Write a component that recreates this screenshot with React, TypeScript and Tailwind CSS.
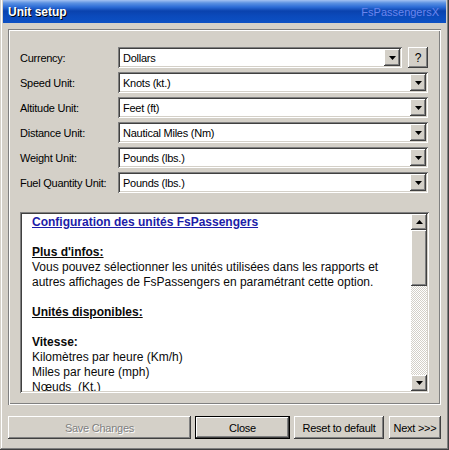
import React from "react";

const raised =
  "shadow-[inset_-1px_-1px_#404040,inset_1px_1px_#ffffff,inset_-2px_-2px_#808080,inset_2px_2px_#d4d0c8]";
const sunken =
  "shadow-[inset_1px_1px_#808080,inset_-1px_-1px_#ffffff,inset_2px_2px_#404040,inset_-2px_-2px_#d4d0c8]";
const etched =
  "shadow-[inset_1px_1px_#808080,inset_-1px_-1px_#ffffff,inset_2px_2px_#ffffff,inset_-2px_-2px_#808080]";

function DownArrow() {
  return (
    <svg width="7" height="4" viewBox="0 0 7 4" className="block">
      <path d="M0 0h7L3.5 4z" fill="#000" />
    </svg>
  );
}
function UpArrow() {
  return (
    <svg width="7" height="4" viewBox="0 0 7 4" className="block">
      <path d="M0 4h7L3.5 0z" fill="#000" />
    </svg>
  );
}

function Combo({ value, wide = true }: { value: string; wide?: boolean }) {
  return (
    <div
      className={`relative h-[21px] bg-white ${sunken} flex items-center ${
        wide ? "w-[310px]" : "w-[284px]"
      }`}
    >
      <span className="pl-[5px] text-black">{value}</span>
      <div
        className={`absolute right-[2px] top-[2px] w-[16px] h-[17px] bg-[#d4d0c8] ${raised} flex items-center justify-center`}
      >
        <DownArrow />
      </div>
    </div>
  );
}

function Row({ label, value }: { label: string; value: string }) {
  return (
    <div className="flex items-center h-[21px]">
      <div className="w-[98px] text-black">{label}</div>
      <Combo value={value} />
    </div>
  );
}

export default function App() {
  return (
    <div
      className="w-[449px] h-[450px] bg-[#d4d0c8] flex flex-col px-[3px] pb-[3px] shadow-[inset_-1px_-1px_#404040,inset_1px_0_#d4d0c8,inset_-2px_-2px_#808080,inset_2px_0_#ffffff] text-[11px] tracking-[-0.25px] leading-[14px] overflow-hidden"
      style={{ fontFamily: '"Liberation Sans", Arial, sans-serif' }}
    >
      {/* Title bar */}
      <div className="h-[23px] shrink-0 flex items-center justify-between pl-[5px] pr-[7px] bg-[linear-gradient(to_bottom,#a4c2f2_0px,#5c92e2_3px,#2c6cd6_7px,#0a42ae_11px,#0b4abb_16px,#0c50c4_23px)]">
        <span className="text-white font-bold text-[12px] tracking-normal [text-shadow:1px_1px_0_#000]">
          Unit setup
        </span>
        <span className="text-[#6b86ee] text-[11px] tracking-normal">FsPassengersX</span>
      </div>

      {/* Body */}
      <div className="flex flex-col px-[5px] pt-[6px]">
        <div className={`h-[376px] ${etched} pl-[12px] pt-[18px] flex flex-col`}>
          <div className="flex flex-col gap-[4px]">
            <div className="flex items-center h-[21px]">
              <div className="w-[98px] text-black">Currency:</div>
              <Combo value="Dollars" wide={false} />
              <div
                className={`ml-[6px] w-[20px] h-[21px] bg-[#d4d0c8] ${raised} flex items-center justify-center text-black text-[12px]`}
              >
                ?
              </div>
            </div>
            <Row label="Speed Unit:" value="Knots (kt.)" />
            <Row label="Altitude Unit:" value="Feet (ft)" />
            <Row label="Distance Unit:" value="Nautical Miles (Nm)" />
            <Row label="Weight Unit:" value="Pounds (lbs.)" />
            <Row label="Fuel Quantity Unit:" value="Pounds (lbs.)" />
          </div>

          {/* Text area */}
          <div
            className={`mt-[19px] w-[409px] h-[181px] bg-white ${sunken} p-[2px] flex`}
          >
            <div className="flex-1 overflow-hidden pl-[10px] pt-[1px] text-[12px] leading-[15px] tracking-normal text-[#0a0a0a] whitespace-nowrap">
              <div className="font-bold underline text-[#1c1ca8]">
                Configuration des unités FsPassengers
              </div>
              <div>&nbsp;</div>
              <div className="font-bold underline">Plus d'infos:</div>
              <div>Vous pouvez sélectionner les unités utilisées dans les rapports et</div>
              <div>autres affichages de FsPassengers en paramétrant cette option.</div>
              <div>&nbsp;</div>
              <div className="font-bold underline">Unités disponibles:</div>
              <div>&nbsp;</div>
              <div className="font-bold">Vitesse:</div>
              <div>Kilomètres par heure (Km/h)</div>
              <div>Miles par heure (mph)</div>
              <div className="whitespace-pre">Nœuds  (Kt.)</div>
            </div>
            {/* Scrollbar */}
            <div className="w-[16px] flex flex-col">
              <div
                className={`h-[16px] bg-[#d4d0c8] ${raised} flex items-center justify-center`}
              >
                <UpArrow />
              </div>
              <div className={`h-[56px] bg-[#d4d0c8] ${raised}`} />
              <div className="flex-1 bg-[repeating-conic-gradient(#d4d0c8_0%_25%,#ffffff_0%_50%)] bg-[length:2px_2px]" />
              <div
                className={`h-[16px] bg-[#d4d0c8] ${raised} flex items-center justify-center`}
              >
                <DownArrow />
              </div>
            </div>
          </div>
        </div>

        {/* Buttons */}
        <div className="mt-[11px] h-[23px] flex">
          <div
            className={`w-[183px] h-[23px] bg-[#d4d0c8] ${raised} flex items-center justify-center text-[#808080] [text-shadow:1px_1px_0_#ffffff]`}
          >
            Save Changes
          </div>
          <div className="ml-[4px] w-[95px] h-[23px] border border-black">
            <div
              className={`w-full h-full bg-[#d4d0c8] ${raised} flex items-center justify-center text-black`}
            >
              Close
            </div>
          </div>
          <div
            className={`ml-[4px] w-[90px] h-[23px] bg-[#d4d0c8] ${raised} flex items-center justify-center text-black`}
          >
            Reset to default
          </div>
          <div
            className={`ml-[5px] w-[52px] h-[23px] bg-[#d4d0c8] ${raised} flex items-center justify-center text-black`}
          >
            Next &gt;&gt;&gt;
          </div>
        </div>
      </div>
    </div>
  );
}
